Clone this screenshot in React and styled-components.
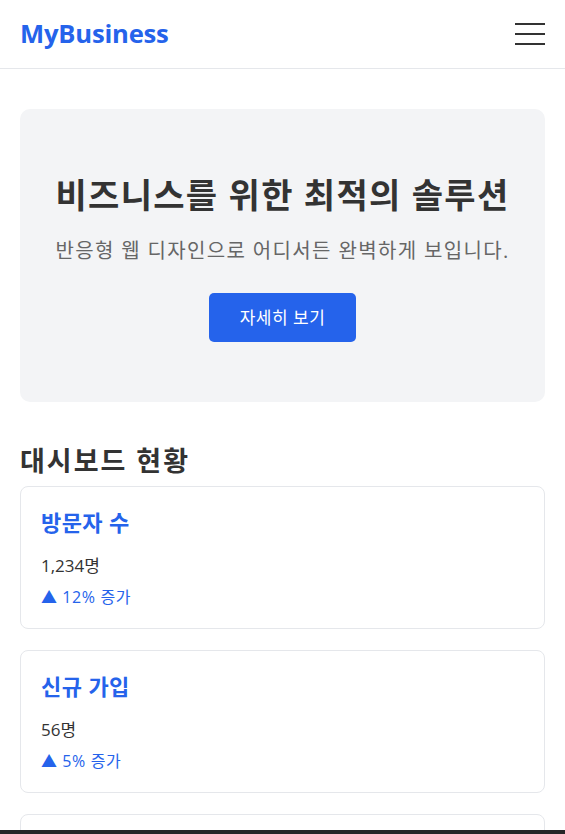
import React from "react";
import styled, { createGlobalStyle } from "styled-components";

const GlobalStyle = createGlobalStyle`
  * { box-sizing: border-box; }
  html, body { margin: 0; padding: 0; background: #fff; }
  body {
    font-family: "Open Sans", "Noto Sans CJK KR", sans-serif;
    color: #333;
    line-height: 1.6;
  }
`;

const Header = styled.header`
  display: flex;
  align-items: center;
  justify-content: space-between;
  height: 69px;
  padding: 0 20px;
  border-bottom: 1px solid #e5e7eb;
  background: #fff;
`;

const Logo = styled.div`
  font-size: 25.6px;
  font-weight: 700;
  color: #2563eb;
  letter-spacing: -0.2px;
`;

const MenuButton = styled.button`
  display: flex;
  flex-direction: column;
  justify-content: space-between;
  width: 30px;
  height: 22px;
  padding: 0;
  border: none;
  background: none;
  cursor: pointer;
`;

const MenuLine = styled.span`
  display: block;
  height: 2px;
  width: 100%;
  background: #333;
`;

const Main = styled.main`
  padding: 40px 20px 0;
`;

const Hero = styled.section`
  background: #f3f4f6;
  border-radius: 10px;
  padding: 60px 20px;
  text-align: center;
  margin-bottom: 40px;
`;

const HeroTitle = styled.h1`
  margin: 0 0 16px;
  font-size: 34px;
  line-height: 52px;
  letter-spacing: 1.3px;
  font-weight: 700;
  color: #333;
`;

const HeroText = styled.p`
  margin: 0 0 28px;
  font-size: 20px;
  line-height: 28px;
  letter-spacing: 1.35px;
  color: #666;
`;

const PrimaryButton = styled.button`
  font-family: inherit;
  font-size: 17px;
  line-height: 25px;
  letter-spacing: 0.5px;
  padding: 12px 31px;
  border: none;
  border-radius: 5px;
  background: #2563eb;
  color: #fff;
  cursor: pointer;
`;

const SectionTitle = styled.h2`
  margin: 0 0 6px;
  font-size: 27px;
  line-height: 38px;
  letter-spacing: 2px;
  font-weight: 700;
  color: #333;
`;

const CardList = styled.div`
  display: flex;
  flex-direction: column;
  gap: 21px;
`;

const Card = styled.div`
  border: 1px solid #e5e7eb;
  border-radius: 8px;
  padding: 20px;
  background: #fff;
`;

const CardTitle = styled.h3`
  margin: 0 0 16px;
  font-size: 22px;
  line-height: 30px;
  letter-spacing: 0.4px;
  font-weight: 700;
  color: #2563eb;
`;

const CardValue = styled.p`
  margin: 0 0 8px;
  font-size: 17px;
  line-height: 25px;
  color: #333;
`;

const CardChange = styled.p`
  margin: 0;
  font-size: 16px;
  line-height: 22px;
  letter-spacing: 0.6px;
  color: #2563eb;
`;

const BottomBar = styled.div`
  position: fixed;
  left: 0;
  right: 0;
  bottom: 0;
  height: 4px;
  background: #262626;
`;

const stats = [
  { title: "방문자 수", value: "1,234명", change: "▲ 12% 증가" },
  { title: "신규 가입", value: "56명", change: "▲ 5% 증가" },
  { title: "매출", value: "₩3,450,000", change: "▲ 8% 증가" },
];

export default function App() {
  return (
    <>
      <GlobalStyle />
      <Header>
        <Logo>MyBusiness</Logo>
        <MenuButton aria-label="메뉴">
          <MenuLine />
          <MenuLine />
          <MenuLine />
        </MenuButton>
      </Header>
      <Main>
        <Hero>
          <HeroTitle>비즈니스를 위한 최적의 솔루션</HeroTitle>
          <HeroText>반응형 웹 디자인으로 어디서든 완벽하게 보입니다.</HeroText>
          <PrimaryButton>자세히 보기</PrimaryButton>
        </Hero>
        <SectionTitle>대시보드 현황</SectionTitle>
        <CardList>
          {stats.map((s) => (
            <Card key={s.title}>
              <CardTitle>{s.title}</CardTitle>
              <CardValue>{s.value}</CardValue>
              <CardChange>{s.change}</CardChange>
            </Card>
          ))}
        </CardList>
      </Main>
      <BottomBar />
    </>
  );
}
